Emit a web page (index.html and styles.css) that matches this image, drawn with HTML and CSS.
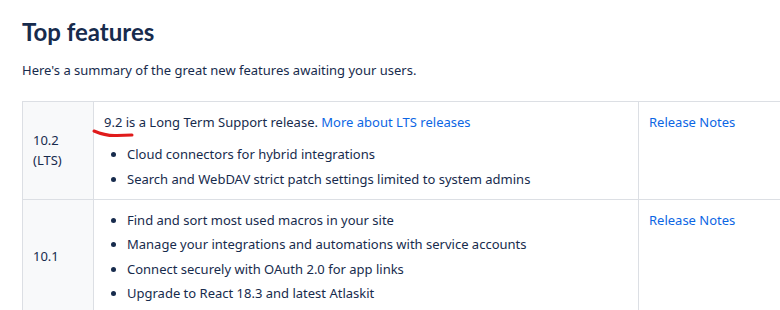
FILE: index.html
```html
<!DOCTYPE html>
<html lang="en">
<head>
    <meta charset="UTF-8">
    <meta name="viewport" content="width=device-width, initial-scale=1.0">
    <title>Top features</title>
    <link rel="stylesheet" href="styles.css">
</head>
<body>
    <div class="page">
        <h1>Top features</h1>
        <p class="intro">Here's a summary of the great new features awaiting your users.</p>

        <table class="features">
            <tr>
                <td class="version">10.2<br>(LTS)</td>
                <td class="notes">
                    <p class="lts"><span class="mark">9.2<svg class="scribble" viewBox="0 0 40 10" width="40" height="10"><path d="M1 3 C 8 6, 16 8, 24 7.5 S 34 7, 39 7" /></svg></span> is a Long Term Support release. <a href="#">More about LTS releases</a></p>
                    <ul>
                        <li>Cloud connectors for hybrid integrations</li>
                        <li>Search and WebDAV strict patch settings limited to system admins</li>
                    </ul>
                </td>
                <td class="link"><a href="#">Release Notes</a></td>
            </tr>
            <tr>
                <td class="version">10.1</td>
                <td class="notes">
                    <ul>
                        <li>Find and sort most used macros in your site</li>
                        <li>Manage your integrations and automations with service accounts</li>
                        <li>Connect securely with OAuth 2.0 for app links</li>
                        <li>Upgrade to React 18.3 and latest Atlaskit</li>
                    </ul>
                </td>
                <td class="link"><a href="#">Release Notes</a></td>
            </tr>
        </table>
    </div>
</body>
</html>
```

FILE: styles.css
```css
* {
    margin: 0;
    padding: 0;
    box-sizing: border-box;
}

body {
    font-family: 'Noto Sans', 'Open Sans', sans-serif;
    font-size: 13px;
    color: #172b4d;
    background: white;
    overflow: hidden;
}

.page {
    padding: 18px 0 0 22px;
}

h1 {
    font-family: 'Lato', 'Inter', sans-serif;
    font-size: 24px;
    font-weight: 700;
    color: #172b4d;
    line-height: 28px;
}

.intro {
    margin-top: 14px;
    line-height: 20px;
}

.features {
    margin-top: 21px;
    width: 880px;
    border-collapse: collapse;
    table-layout: fixed;
}

.features td {
    border: 1px solid #dcdfe4;
    vertical-align: top;
    line-height: 20px;
    padding: 10px 10px 10px 10px;
}

.features td.version {
    width: 71px;
    background: #f8f9fa;
    vertical-align: middle;
}

.features td.notes {
    width: 545px;
}

a {
    color: #0c66e4;
    text-decoration: none;
}

.lts {
    margin-bottom: 12px;
}

.mark {
    position: relative;
}

.scribble {
    position: absolute;
    left: -11px;
    top: 15px;
    overflow: visible;
}

.scribble path {
    fill: none;
    stroke: #e01b1b;
    stroke-width: 3;
    stroke-linecap: round;
}

ul {
    padding-left: 23px;
}

li + li {
    margin-top: 4.5px;
}
```
